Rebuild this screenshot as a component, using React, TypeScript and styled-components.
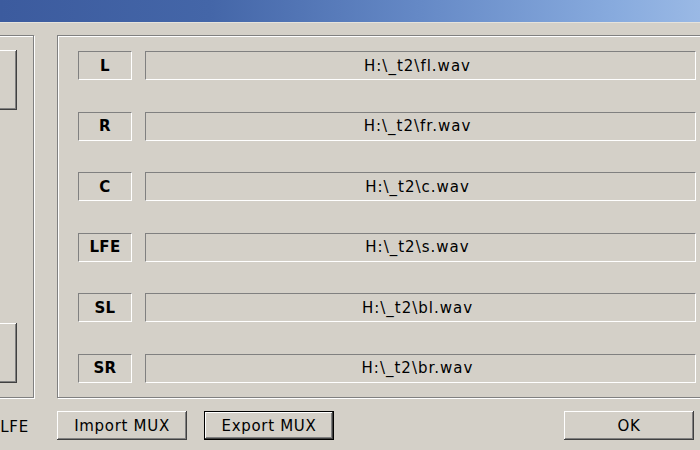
import React from "react";
import styled, { createGlobalStyle } from "styled-components";

const Global = createGlobalStyle`
  html, body { margin: 0; padding: 0; background: #d4d0c8; }
  body { width: 700px; height: 450px; overflow: hidden; }
`;

const Window = styled.div`
  width: 700px;
  height: 450px;
  overflow: hidden;
  background: #d4d0c8;
  font-family: "DejaVu Sans", Verdana, sans-serif;
  color: #000;
  display: flex;
  flex-direction: column;
`;

const TitleBar = styled.div`
  height: 22px;
  flex: none;
  background: linear-gradient(to right, #3c5b9e 0%, #4466a8 30%, #6589c6 60%, #88abde 88%, #9ab9e5 100%);
  border-bottom: 1px solid #e6e3dc;
`;

const Body = styled.div`
  display: flex;
  flex-direction: column;
  padding-top: 12px;
`;

const Groups = styled.div`
  display: flex;
  gap: 23px;
  margin-left: -26px;
`;

const GroupBox = styled.div<{ $w: number }>`
  box-sizing: border-box;
  flex: none;
  width: ${(p) => p.$w}px;
  height: 363px;
  border: 1px solid #808080;
  box-shadow: inset 1px 1px 0 #ffffff, 1px 1px 0 #ffffff;
`;

const LeftColumn = styled(GroupBox)`
  display: flex;
  flex-direction: column;
  justify-content: space-between;
  padding: 14px 0 14px 1px;
`;

const Channels = styled(GroupBox)`
  display: flex;
  flex-direction: column;
  justify-content: space-between;
  padding: 15px 0 14px 20px;
`;

const SideButton = styled.div`
  box-sizing: border-box;
  width: 41px;
  height: 60px;
  background: #d4d0c8;
  box-shadow: inset -1px -1px 0 #404040, inset 1px 1px 0 #ffffff,
    inset -2px -2px 0 #808080;
`;

const Row = styled.div`
  display: flex;
  align-items: stretch;
  gap: 13px;
  height: 29px;
`;

const Sunken = styled.div`
  box-sizing: border-box;
  display: flex;
  align-items: center;
  justify-content: center;
  border-top: 1px solid #808080;
  border-left: 1px solid #808080;
  border-bottom: 1px solid #ffffff;
  border-right: 1px solid #ffffff;
`;

const Label = styled(Sunken)`
  width: 54px;
  font-weight: bold;
  font-size: 15px;
  letter-spacing: 0.3px;
`;

const Value = styled(Sunken)`
  width: 551px;
  font-size: 15px;
  letter-spacing: 1px;
  padding-right: 6px;
`;

const Footer = styled.div`
  display: flex;
  align-items: center;
  margin-top: 13px;
  padding-right: 6px;
`;

const FooterLabel = styled.div`
  box-sizing: border-box;
  flex: none;
  width: 86px;
  margin-left: -29px;
  padding: 3px 28px 0 0;
  text-align: right;
  font-size: 15px;
  letter-spacing: 0.8px;
`;

const Button = styled.div<{ $default?: boolean; $push?: boolean }>`
  box-sizing: border-box;
  width: 130px;
  height: 29px;
  display: flex;
  align-items: center;
  justify-content: center;
  font-size: 15px;
  letter-spacing: 0.7px;
  background: #d4d0c8;
  margin-left: ${(p) => (p.$push ? "auto" : "0")};
  border: ${(p) => (p.$default ? "1px solid #000" : "none")};
  box-shadow: inset -1px -1px 0 #404040, inset 1px 1px 0 #ffffff,
    inset -2px -2px 0 #808080;
`;

const Gap = styled.div`
  width: 17px;
  flex: none;
`;

const channels = [
  { l: "L", v: "H:\\_t2\\fl.wav" },
  { l: "R", v: "H:\\_t2\\fr.wav" },
  { l: "C", v: "H:\\_t2\\c.wav" },
  { l: "LFE", v: "H:\\_t2\\s.wav" },
  { l: "SL", v: "H:\\_t2\\bl.wav" },
  { l: "SR", v: "H:\\_t2\\br.wav" },
];

export default function App() {
  return (
    <>
      <Global />
      <Window>
        <TitleBar />
        <Body>
          <Groups>
            <LeftColumn $w={60}>
              <SideButton />
              <SideButton />
            </LeftColumn>
            <Channels $w={680}>
              {channels.map((c) => (
                <Row key={c.l}>
                  <Label>{c.l}</Label>
                  <Value>{c.v}</Value>
                </Row>
              ))}
            </Channels>
          </Groups>
          <Footer>
            <FooterLabel>LFE</FooterLabel>
            <Button>Import MUX</Button>
            <Gap />
            <Button $default>Export MUX</Button>
            <Button $push>OK</Button>
          </Footer>
        </Body>
      </Window>
    </>
  );
}
